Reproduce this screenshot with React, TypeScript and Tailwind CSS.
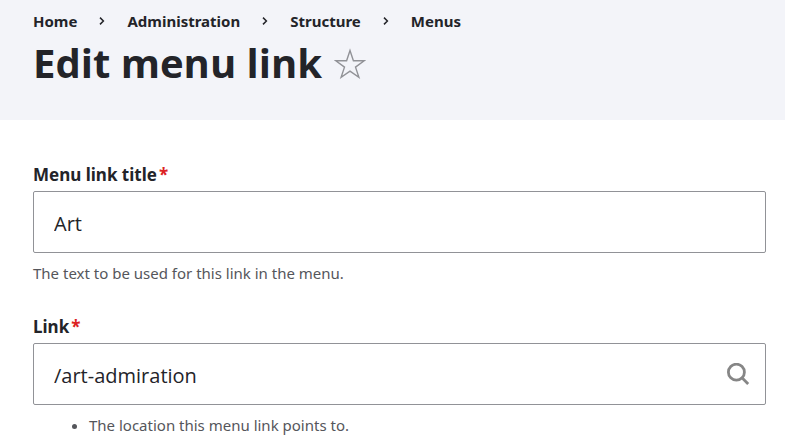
import { useState } from "react";

const crumbs = ["Home", "Administration", "Structure", "Menus"];

function Chevron() {
    return (
        <svg width="6" height="8" viewBox="0 0 6 8" fill="none" stroke="#232429" strokeWidth="1.5" aria-hidden="true">
            <path d="M1 .6l3.4 3.4-3.4 3.4" />
        </svg>
    );
}

function RequiredMark() {
    return <span className="ml-0.5 text-[#dc2323]" aria-hidden="true">*</span>;
}

export default function App() {
    const [title, setTitle] = useState("Art");
    const [link, setLink] = useState("/art-admiration");

    return (
        <div className="min-h-screen bg-white font-['Noto_Sans',sans-serif] text-[#232429]">
            <header className="bg-[#f3f4f9] pl-[33px] pr-[19px] pt-[9px] pb-[29px]">
                <nav aria-label="Breadcrumb" className="mb-0.5">
                    <ol className="flex items-center text-[15px] leading-6 font-bold">
                        {crumbs.map((crumb, i) => (
                            <li key={crumb} className="flex items-center">
                                {i > 0 && <span className="mx-[22px]"><Chevron /></span>}
                                <a href="#">{crumb}</a>
                            </li>
                        ))}
                    </ol>
                </nav>
                <div className="flex items-center gap-3">
                    <h1 className="font-['Open_Sans',sans-serif] text-[40px] leading-14 font-bold">Edit menu link</h1>
                    <button type="button" aria-label="Add to shortcuts">
                        <svg width="32" height="32" viewBox="0 0 32 32" fill="none" stroke="#919297" strokeWidth="1.4">
                            <path d="M16 3.5l3.4 10.2h10.8l-8.7 6.4 3.4 10.2-8.9-6.2-8.9 6.2 3.4-10.2-8.7-6.4h10.8z" />
                        </svg>
                    </button>
                </div>
            </header>

            <form className="font-['Open_Sans',sans-serif] pl-[33px] pr-[19px] pt-[41px]">
                <div className="mb-7">
                    <label htmlFor="title" className="block font-['Noto_Sans',sans-serif] text-[17px] leading-7 font-bold">
                        Menu link title<RequiredMark />
                    </label>
                    <input
                        id="title"
                        type="text"
                        required
                        className="mt-0.5 block w-full h-[62px] px-5 pt-0.5 text-xl border border-[#919297] rounded-xs focus:outline-none"
                        value={title}
                        onChange={(e) => setTitle(e.target.value)}
                    />
                    <p className="mt-2 font-['Noto_Sans',sans-serif] text-[15px] leading-6 text-[#55565b]">
                        The text to be used for this link in the menu.
                    </p>
                </div>

                <div>
                    <label htmlFor="link" className="block font-['Noto_Sans',sans-serif] text-[17px] leading-7 font-bold">
                        Link<RequiredMark />
                    </label>
                    <div className="relative mt-0.5">
                        <input
                            id="link"
                            type="text"
                            required
                            className="block w-full h-[62px] pl-5 pr-14 pt-0.5 text-xl border border-[#919297] rounded-xs focus:outline-none"
                            value={link}
                            onChange={(e) => setLink(e.target.value)}
                        />
                        <svg
                            className="absolute right-4 top-5"
                            width="24"
                            height="24"
                            viewBox="0 0 24 24"
                            fill="none"
                            stroke="#868686"
                            strokeWidth="2.8"
                            aria-hidden="true">
                            <circle cx="10.4" cy="9.2" r="8" />
                            <path d="M16 14.8l6.2 6.2" />
                        </svg>
                    </div>
                    <ul className="mt-2 pl-14 list-disc font-['Noto_Sans',sans-serif] text-[15px] leading-6 text-[#55565b]">
                        <li>The location this menu link points to.</li>
                    </ul>
                </div>
            </form>
        </div>
    );
}
